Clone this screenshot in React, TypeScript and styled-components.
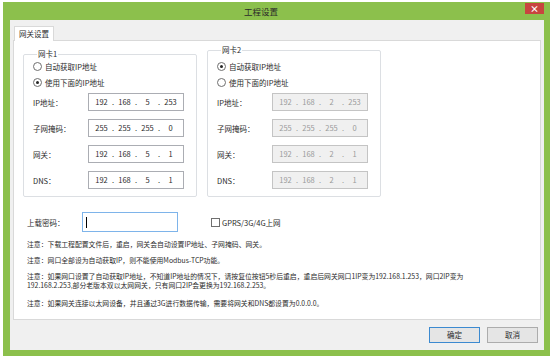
import React from 'react';
import styled, { createGlobalStyle } from 'styled-components';

type Nic = {
  name: string;
  auto: boolean;
  ip: string[];
  mask: string[];
  gateway: string[];
  dns: string[];
};

const nics: Nic[] = [
  {
    name: '网卡1',
    auto: false,
    ip: ['192', '168', '5', '253'],
    mask: ['255', '255', '255', '0'],
    gateway: ['192', '168', '5', '1'],
    dns: ['192', '168', '5', '1'],
  },
  {
    name: '网卡2',
    auto: true,
    ip: ['192', '168', '2', '253'],
    mask: ['255', '255', '255', '0'],
    gateway: ['192', '168', '2', '1'],
    dns: ['192', '168', '2', '1'],
  },
];

//
// PARTS
//
const IpInput = ({ parts, disabled }: { parts: string[]; disabled: boolean }) => (
  <IpBox $disabled={disabled}>
    {parts.map((p, i) => (
      <React.Fragment key={i}>
        {i > 0 && <IpDot>.</IpDot>}
        <IpPart>{p}</IpPart>
      </React.Fragment>
    ))}
  </IpBox>
);

const NicGroup = ({ nic, raised }: { nic: Nic; raised: boolean }) => {
  const rows: [string, string[]][] = [
    ['IP地址：', nic.ip],
    ['子网掩码：', nic.mask],
    ['网关：', nic.gateway],
    ['DNS：', nic.dns],
  ];
  return (
    <Group $raised={raised}>
      <Legend>{nic.name}</Legend>
      <RadioList>
        <RadioRow>
          <Radio $checked={nic.auto} />
          自动获取IP地址
        </RadioRow>
        <RadioRow>
          <Radio $checked={!nic.auto} />
          使用下面的IP地址
        </RadioRow>
      </RadioList>
      {rows.map(([label, parts]) => (
        <FieldRow key={label}>
          <FieldLabel>{label}</FieldLabel>
          <IpInput parts={parts} disabled={nic.auto} />
        </FieldRow>
      ))}
    </Group>
  );
};

//
// MAIN COMPONENT
//
const App = () => {
  return (
    <>
      <GlobalStyle />
      <Window>
        <TitleBar>
          <Title>工程设置</Title>
          <CloseButton>×</CloseButton>
        </TitleBar>
        <ClientArea>
          <Tab>网关设置</Tab>
          <Panel>
            <GroupRow>
              <NicGroup nic={nics[0]} raised={false} />
              <NicGroup nic={nics[1]} raised={true} />
            </GroupRow>
            <UploadRow>
              <FieldLabel>上载密码：</FieldLabel>
              <PasswordInput>
                <Caret />
              </PasswordInput>
              <CheckRow>
                <CheckBox />
                GPRS/3G/4G上网
              </CheckRow>
            </UploadRow>
            <Notes>
              <Note>注意：下载工程配置文件后，重启，网关会自动设置IP地址、子网掩码、网关。</Note>
              <Note>注意：网口全部设为自动获取IP，则不能使用Modbus-TCP功能。</Note>
              <Note>
                注意：如果网口设置了自动获取IP地址，不知道IP地址的情况下，请按复位按钮5秒后重启，重启后网关网口1IP变为192.168.1.253，网口2IP变为
                <br />
                192.168.2.253,部分老版本双以太网网关，只有网口2IP会更换为192.168.2.253。
              </Note>
              <Note $spaced>注意：如果网关连接以太网设备，并且通过3G进行数据传输，需要将网关和DNS都设置为0.0.0.0。</Note>
            </Notes>
          </Panel>
          <Footer>
            <Button $primary>确定</Button>
            <Button>取消</Button>
          </Footer>
        </ClientArea>
      </Window>
    </>
  );
};

export default App;

//
// STYLED COMPONENT
//
const GlobalStyle = createGlobalStyle`
  body {
    margin: 0;
    background: #ffffff;
    font-family: "Noto Sans CJK SC", "Noto Sans", sans-serif;
    color: #2b2b2b;
  }
`;

const Window = styled.div`
  margin: 2px 0 0 3px;
  width: 547px;
  height: 354px;
  background: #8cc04c;
  display: flex;
  flex-direction: column;
`;

const TitleBar = styled.div`
  height: 18px;
  display: flex;
  align-items: flex-start;
`;

const Title = styled.div`
  flex: 1;
  text-align: center;
  padding-right: 6px;
  font-size: 8.5px;
  line-height: 18px;
  color: #2a2a2a;
`;

const CloseButton = styled.div`
  margin: 1px 6px 0 0;
  width: 19px;
  height: 11px;
  background: #c8453f;
  color: #ffffff;
  font-size: 9px;
  font-weight: bold;
  line-height: 11px;
  text-align: center;
`;

const ClientArea = styled.div`
  flex: 1;
  margin: 0 6px 6px 7px;
  background: #f0f0f0;
  padding: 6px 3px 0;
  display: flex;
  flex-direction: column;
`;

const Tab = styled.div`
  align-self: flex-start;
  margin-left: 1px;
  margin-bottom: -1px;
  height: 15px;
  box-sizing: border-box;
  padding: 0 4px;
  border: 1px solid #d9d9d9;
  border-bottom: none;
  background: #ffffff;
  font-size: 7.5px;
  line-height: 14px;
  position: relative;
  z-index: 1;
`;

const Panel = styled.div`
  height: 280px;
  box-sizing: border-box;
  border: 1px solid #d9d9d9;
  background: #ffffff;
  display: flex;
  flex-direction: column;
`;

const GroupRow = styled.div`
  display: flex;
  align-items: flex-start;
  gap: 10px;
  padding: 4px 0 0 9px;
`;

const Group = styled.fieldset<{ $raised: boolean }>`
  margin: ${(p) => (p.$raised ? '0' : '4px')} 0 0;
  padding: ${(p) => (p.$raised ? '4px' : '0')} 8px 3px 9px;
  width: 174px;
  box-sizing: border-box;
  border: 1px solid #dcdfe3;
  border-radius: 2px;
  min-width: 0;
`;

const Legend = styled.legend`
  padding: 0 1px;
  margin-left: 4px;
  font-size: 7.5px;
  line-height: 10px;
`;

const RadioList = styled.div`
  display: flex;
  flex-direction: column;
  gap: 2px;
`;

const RadioRow = styled.div`
  height: 14px;
  display: flex;
  align-items: center;
  gap: 3px;
  font-size: 7.5px;
`;

const Radio = styled.span<{ $checked: boolean }>`
  width: 7px;
  height: 7px;
  border: 1px solid #6f6f6f;
  border-radius: 50%;
  background: #ffffff;
  display: flex;
  align-items: center;
  justify-content: center;
  &::after {
    content: '';
    width: 3px;
    height: 3px;
    border-radius: 50%;
    background: ${(p) => (p.$checked ? '#262626' : 'transparent')};
  }
`;

const FieldRow = styled.div`
  height: 26px;
  display: flex;
  align-items: center;
`;

const FieldLabel = styled.div`
  width: 55px;
  flex-shrink: 0;
  font-size: 7.5px;
`;

const IpBox = styled.div<{ $disabled: boolean }>`
  width: 96px;
  height: 18px;
  box-sizing: border-box;
  border: 1px solid ${(p) => (p.$disabled ? '#c4c4c4' : '#abadb3')};
  background: ${(p) => (p.$disabled ? '#f0f0f0' : '#ffffff')};
  color: ${(p) => (p.$disabled ? '#9a9a9a' : '#2b2b2b')};
  display: flex;
  align-items: center;
  padding: 0 3px 1px;
  font-size: 7.5px;
`;

const IpPart = styled.span`
  flex: 1;
  text-align: center;
`;

const IpDot = styled.span`
  width: 4px;
  text-align: center;
`;

const UploadRow = styled.div`
  display: flex;
  align-items: center;
  height: 20px;
  margin-top: 15px;
  padding-left: 13px;
`;

const PasswordInput = styled.div`
  width: 96px;
  height: 20px;
  box-sizing: border-box;
  border: 1px solid #7eb4ea;
  background: #ffffff;
  display: flex;
  align-items: center;
  padding-left: 3px;
`;

const Caret = styled.span`
  width: 1px;
  height: 11px;
  background: #000000;
`;

const CheckRow = styled.div`
  display: flex;
  align-items: center;
  gap: 2px;
  margin-left: 33px;
  font-size: 7.5px;
`;

const CheckBox = styled.span`
  width: 7px;
  height: 7px;
  border: 1px solid #6f6f6f;
  background: #ffffff;
`;

const Notes = styled.div`
  display: flex;
  flex-direction: column;
  gap: 7px;
  margin-top: 8px;
  padding-left: 13px;
`;

const Note = styled.div<{ $spaced?: boolean }>`
  margin-top: ${(p) => (p.$spaced ? '2px' : '0')};
  font-size: 6.85px;
  line-height: 9px;
  white-space: nowrap;
`;

const Footer = styled.div`
  display: flex;
  justify-content: flex-end;
  gap: 7px;
  padding: 7px 3px 0;
`;

const Button = styled.div<{ $primary?: boolean }>`
  width: 51px;
  height: 16px;
  box-sizing: border-box;
  border: 1px solid ${(p) => (p.$primary ? '#3c8ad0' : '#acacac')};
  background: #e5e5e5;
  font-size: 7.5px;
  line-height: 14px;
  text-align: center;
`;
